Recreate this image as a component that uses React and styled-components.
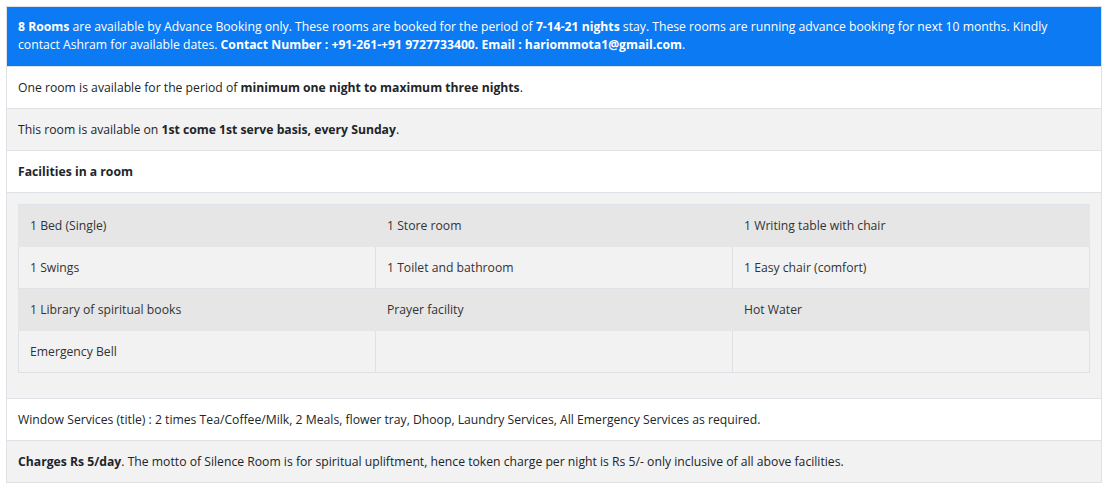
import React from "react";
import styled, { createGlobalStyle } from "styled-components";

const GlobalStyle = createGlobalStyle`
  body {
    margin: 0;
    background: #ffffff;
    font-family: "Open Sans", "Noto Sans", sans-serif;
    font-size: 12.2px;
    line-height: 18px;
    color: #212529;
  }
`;

const Page = styled.div`
  padding: 6px 7px 6px 6px;
`;

const Table = styled.table`
  width: 100%;
  border-collapse: collapse;
  border: 1px solid #dee2e6;
`;

const Row = styled.tr`
  background: ${(p) => (p.$tone === "blue" ? "#0b7af3" : p.$tone === "grey" ? "#f2f2f2" : "#ffffff")};
  color: ${(p) => (p.$tone === "blue" ? "#ffffff" : "#212529")};
`;

const Cell = styled.td`
  padding: ${(p) => (p.$nested ? "11px 11px 25px 11px" : "12px 11px 11px")};
  border-top: 1px solid #dee2e6;
  vertical-align: top;
`;

const BlueCell = styled(Cell)`
  padding: 11px 11px 12px;
  border-top: none;
`;

const Inner = styled.table`
  width: 100%;
  border-collapse: collapse;
  border: 1px solid #dee2e6;
  table-layout: fixed;
`;

const InnerRow = styled.tr`
  background: ${(p) => (p.$odd ? "#e6e6e6" : "#f2f2f2")};
`;

const InnerCell = styled.td`
  padding: 12px 11px 11px;
  border: 1px solid ${(p) => (p.$odd ? "#e6e6e6" : "#dee2e6")};
  border-top-color: #dee2e6;
  color: #333;
  height: 18px;
`;

const facilities = [
  ["1 Bed (Single)", "1 Store room", "1 Writing table with chair"],
  ["1 Swings", "1 Toilet and bathroom", "1 Easy chair (comfort)"],
  ["1 Library of spiritual books", "Prayer facility", "Hot Water"],
  ["Emergency Bell", "", ""],
];

export default function App() {
  return (
    <Page>
      <GlobalStyle />
      <Table>
        <tbody>
          <Row $tone="blue">
            <BlueCell>
              <b>8 Rooms</b> are available by Advance Booking only. These rooms are booked for the period of{" "}
              <b>7-14-21 nights</b> stay. These rooms are running advance booking for next 10 months. Kindly
              contact Ashram for available dates.{" "}
              <b>Contact Number : +91-261-+91 9727733400. Email : hariommota1@gmail.com</b>.
            </BlueCell>
          </Row>
          <Row>
            <Cell>
              One room is available for the period of <b>minimum one night to maximum three nights</b>.
            </Cell>
          </Row>
          <Row $tone="grey">
            <Cell>
              This room is available on <b>1st come 1st serve basis, every Sunday</b>.
            </Cell>
          </Row>
          <Row>
            <Cell>
              <b>Facilities in a room</b>
            </Cell>
          </Row>
          <Row $tone="grey">
            <Cell $nested>
              <Inner>
                <tbody>
                  {facilities.map((r, i) => (
                    <InnerRow key={i} $odd={i % 2 === 0}>
                      {r.map((c, j) => (
                        <InnerCell key={j} $odd={i % 2 === 0}>
                          {c}
                        </InnerCell>
                      ))}
                    </InnerRow>
                  ))}
                </tbody>
              </Inner>
            </Cell>
          </Row>
          <Row>
            <Cell>
              Window Services (title) : 2 times Tea/Coffee/Milk, 2 Meals, flower tray, Dhoop, Laundry Services, All
              Emergency Services as required.
            </Cell>
          </Row>
          <Row $tone="grey">
            <Cell>
              <b>Charges Rs 5/day</b>. The motto of Silence Room is for spiritual upliftment, hence token charge per
              night is Rs 5/- only inclusive of all above facilities.
            </Cell>
          </Row>
        </tbody>
      </Table>
    </Page>
  );
}
